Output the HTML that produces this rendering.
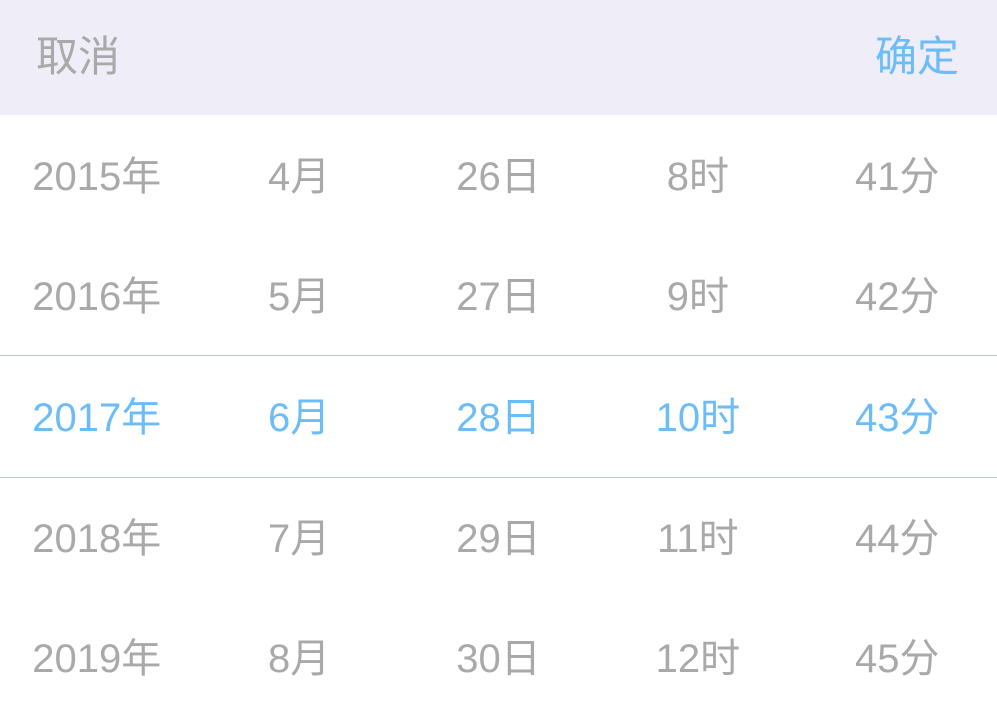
<!DOCTYPE html>
<html><head><meta charset="utf-8"><style>
html,body{margin:0;padding:0;width:997px;height:718px;overflow:hidden;background:#fff;
font-family:"Liberation Sans","Noto Sans CJK SC",sans-serif;}
.hd{position:absolute;left:0;top:0;width:997px;height:115px;background:#efedf7;}
.hd span{position:absolute;top:31px;font-size:42px;line-height:52px;}
.c{left:36px;color:#a9a9a9}
.o{right:38px;color:#6cbcf8}
.row{position:absolute;left:0;width:997px;height:120px;display:flex;}
.row div{width:199.4px;text-align:center;font-size:40px;line-height:124px;color:#a9a9a9;}
.row div:first-child{margin-left:-3px;margin-right:3px}
.row.s div{color:#6cbcf8}
.ln{position:absolute;left:0;width:997px;height:1px;background:#b8c8d8;}
</style></head><body>
<div class="hd"><span class="c">取消</span><span class="o">确定</span></div>
<div class="row" style="top:115px"><div>2015年</div><div>4月</div><div>26日</div><div>8时</div><div>41分</div></div>
<div class="row" style="top:235px"><div>2016年</div><div>5月</div><div>27日</div><div>9时</div><div>42分</div></div>
<div class="row s" style="top:356px"><div>2017年</div><div>6月</div><div>28日</div><div>10时</div><div>43分</div></div>
<div class="row" style="top:477px"><div>2018年</div><div>7月</div><div>29日</div><div>11时</div><div>44分</div></div>
<div class="row" style="top:597px"><div>2019年</div><div>8月</div><div>30日</div><div>12时</div><div>45分</div></div>
<div class="ln" style="top:355px"></div>
<div class="ln" style="top:477px"></div>
</body></html>
